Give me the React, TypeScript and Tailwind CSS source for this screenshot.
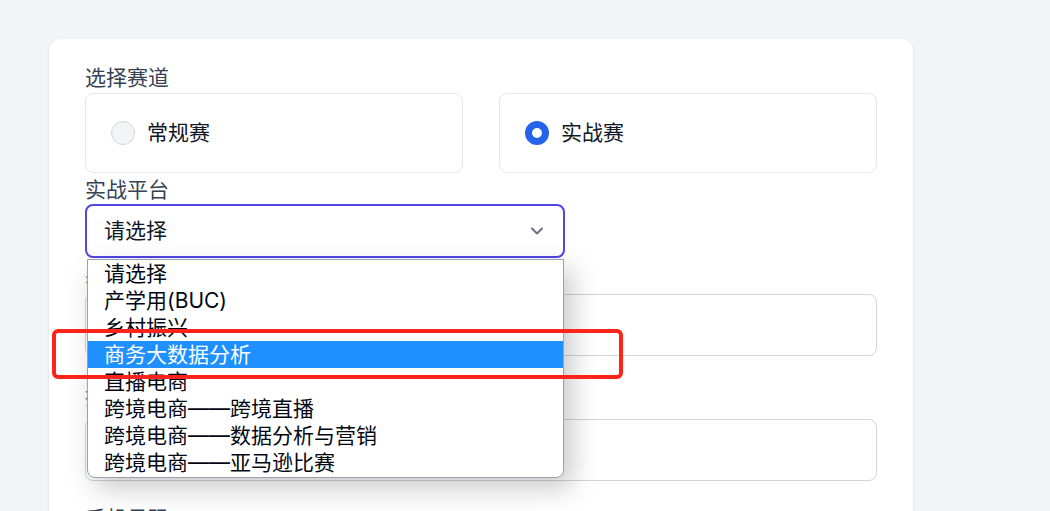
import { ChevronDown } from "lucide-react";

const font = { fontFamily: '"Inter", "Noto Sans CJK SC", sans-serif' };

const options = [
  "请选择",
  "产学用(BUC)",
  "乡村振兴",
  "商务大数据分析",
  "直播电商",
  "跨境电商——跨境直播",
  "跨境电商——数据分析与营销",
  "跨境电商——亚马逊比赛",
];

function Radio({ label, checked }: { label: string; checked?: boolean }) {
  return (
    <div className="flex h-[80px] items-center gap-3 rounded-lg border border-gray-200 bg-white pl-[25px]">
      {checked ? (
        <span className="h-6 w-6 rounded-full border-[7px] border-[#2563eb] bg-white" />
      ) : (
        <span className="h-6 w-6 rounded-full border border-gray-300 bg-gray-100" />
      )}
      <span className="text-[21px] text-gray-900">{label}</span>
    </div>
  );
}

export default function App() {
  return (
    <div className="relative h-[511px] overflow-hidden bg-gray-100 pl-[49px] pt-[39px]" style={font}>
      <div className="w-[864px] rounded-xl bg-white px-9 pt-[25px] pb-10 shadow-sm">
        <div className="text-[21px] leading-7 text-gray-700">选择赛道</div>
        <div className="mt-px grid grid-cols-2 gap-9">
          <Radio label="常规赛" />
          <Radio label="实战赛" checked />
        </div>

        <div className="mt-[3px] text-[21px] leading-7 text-gray-700">实战平台</div>
        <div className="relative w-[480px]">
          <div className="flex h-[54px] items-center justify-between rounded-lg border-2 border-[#4f46e5] bg-white pl-[17px] pr-4">
            <span className="text-[21px] text-gray-900">请选择</span>
            <ChevronDown className="h-5 w-5 text-gray-500" strokeWidth={2.5} />
          </div>
          <ul className="absolute left-[2px] top-[55px] z-10 w-[477px] overflow-hidden rounded-b-lg border border-gray-400 bg-white pb-[1px] shadow-[8px_10px_28px_rgba(0,0,0,0.22)]">
            {options.map((o, i) => (
              <li
                key={o}
                className={`h-[27px] pl-4 text-[21px] leading-[27px] ${
                  i === 3 ? "bg-[#1e90ff] text-white" : "text-gray-950"
                }`}
              >
                {o}
              </li>
            ))}
          </ul>
        </div>

        <div className="mt-[8px] text-[21px] leading-7 text-[#8a6a3a]">参赛团队</div>
        <div className="h-[62px] rounded-lg border border-gray-300" />
        <div className="mt-[27px] text-[21px] leading-7 text-[#8a6a3a]">指导老师</div>
        <div className="mt-[8px] h-[62px] rounded-lg border border-gray-300" />
        <div className="mt-[24px] text-[21px] leading-7 text-gray-700">手机号码</div>
      </div>

      <div className="pointer-events-none absolute left-[52px] top-[329px] z-20 h-[50px] w-[571px] rounded-md border-4 border-[#ff2419]" />
    </div>
  );
}
